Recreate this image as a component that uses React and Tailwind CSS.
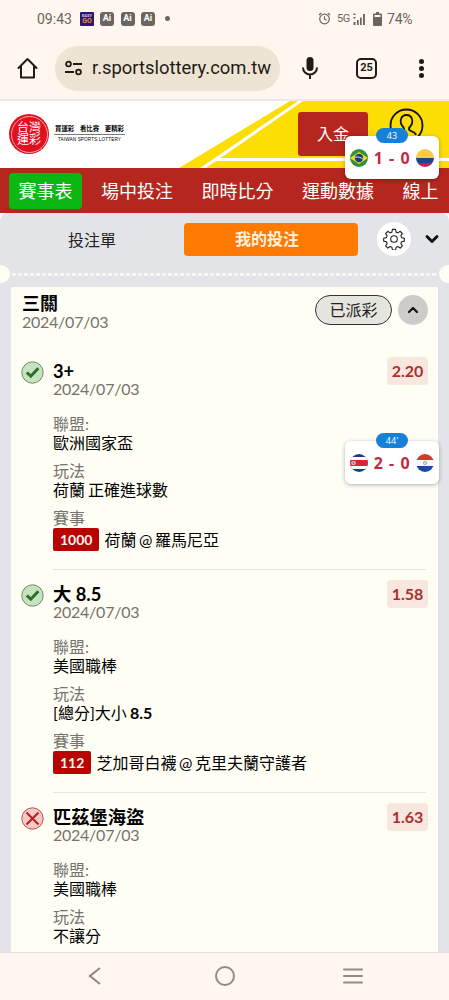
import React from "react";
import { ChevronDown, ChevronUp } from "lucide-react";

const NAV_ITEMS = ["場中投注", "即時比分", "運動數據", "線上"];

const BETS = [
  {
    title: "3+",
    won: true,
    odds: "2.20",
    league: "歐洲國家盃",
    play: "荷蘭 正確進球數",
    code: "1000",
    match: "荷蘭 @ 羅馬尼亞",
  },
  {
    title: "大 8.5",
    won: true,
    odds: "1.58",
    league: "美國職棒",
    play: (
      <>
        [總分]大小 <span className="font-bold">8.5</span>
      </>
    ),
    code: "112",
    match: "芝加哥白襪 @ 克里夫蘭守護者",
  },
  {
    title: "匹茲堡海盜",
    won: false,
    odds: "1.63",
    league: "美國職棒",
    play: "不讓分",
  },
];

const StatusBar = () => (
  <div className="flex h-[37px] shrink-0 items-center pl-[37px] pr-[36px] font-[Roboto] text-[14px] leading-none text-[#6b6561]">
    <span className="w-[35px]">09:43</span>
    <div className="ml-2 flex h-[14px] w-[14px] flex-col items-center justify-center rounded-[1px] bg-[#2b1675]">
      <span className="text-[4px] leading-[5px] font-bold text-[#d8d0f8]">EASY</span>
      <span className="text-[7px] leading-[6px] font-bold text-[#f0865c]">GO</span>
    </div>
    <div className="ml-[6px] flex gap-[6.500px]">
      {[0, 1, 2].map((i) => (
        <span
          key={i}
          className="flex h-[14px] w-[14px] items-center justify-center rounded-[3px] bg-[#6b6561] text-[9px] font-bold text-white"
        >
          Ai
        </span>
      ))}
    </div>
    <span className="ml-[10px] h-[5px] w-[5px] rounded-full bg-[#6b6561]" />
    <svg className="ml-auto" width="13" height="13" viewBox="0 0 13 13" fill="none" stroke="#6b6561">
      <circle cx="6.5" cy="7" r="4.8" strokeWidth="1.2" />
      <path d="M6.5 4.2V7l2 1.3M1 3 3.2 1M12 3 9.8 1" strokeWidth="1.2" />
    </svg>
    <span className="ml-[6px] w-[13px] text-[11px] tracking-[-0.5px]">5G</span>
    <svg className="ml-[2px]" width="14" height="12" viewBox="0 0 14 12" fill="#6b6561">
      <path d="M1 2l1.5-2L4 2zM1 4h3L2.500 6zM1.500 9h2v3h-2zM5 7h1.700v5H5zM8 4.500h1.700V12H8zM11 1h1.900v11H11z" />
    </svg>
    <svg className="ml-[7px]" width="9" height="14" viewBox="0 0 9 14">
      <path d="M3 0h3v1.500h2A1 1 0 0 1 9 2.500V13a1 1 0 0 1-1 1H1a1 1 0 0 1-1-1V2.500A1 1 0 0 1 1 1.500h2z" fill="#6b6561" />
      <path d="M1.500 3h6v2h-6z" fill="#fef6ef" />
    </svg>
    <span className="ml-[5px] w-[26px] tracking-[-0.2px]">74%</span>
  </div>
);

const AddressBar = () => (
  <div className="flex h-[64px] shrink-0 items-center border-b-2 border-[#eee8e2] pl-[17px] pr-[25px] text-[#1e1b16]">
    <svg width="21" height="22" viewBox="0 0 21 22" fill="none" stroke="currentColor" strokeWidth="2" strokeLinejoin="round" strokeLinecap="round">
      <path d="M1.500 11 10.500 2l9 9M4 9.500V20.500h13V9.500" />
    </svg>
    <div className="ml-[17px] flex h-[45px] w-[225px] items-center rounded-full bg-[#ede4d3] pl-[10px]">
      <svg width="17" height="16" viewBox="0 0 17 16" fill="none" stroke="currentColor" strokeWidth="1.800">
        <circle cx="3.500" cy="4" r="2.400" />
        <path d="M8 4h9M0 12h9" />
        <circle cx="13.500" cy="12" r="2.400" />
      </svg>
      <span className="ml-[10px] w-[180px] font-[Roboto] text-[18.400px] whitespace-nowrap">
        r.sportslottery.com.tw
      </span>
    </div>
    <svg className="ml-[22px]" width="16" height="22" viewBox="0 0 16 22">
      <rect x="4.500" y="0" width="7" height="14" rx="3.500" fill="currentColor" />
      <path d="M1 10.500a7 7 0 0 0 14 0M8 17v5" fill="none" stroke="currentColor" strokeWidth="2" />
    </svg>
    <div className="ml-[38px] flex h-[21px] w-[21px] items-center justify-center rounded-[5px] border-2 border-current font-[Roboto] text-[11px] font-bold">
      25
    </div>
    <div className="ml-auto flex flex-col gap-[2px]">
      <span className="h-[5px] w-[5px] rounded-full bg-current" />
      <span className="h-[5px] w-[5px] rounded-full bg-current" />
      <span className="h-[5px] w-[5px] rounded-full bg-current" />
    </div>
  </div>
);

const SiteHeader = () => (
  <header className="relative flex h-[67px] shrink-0 items-start bg-white">
    <svg className="absolute inset-0" width="449" height="67" viewBox="0 0 449 67">
      <path d="M179 67 290 0h159v67z" fill="#fcdd04" />
      <path d="M200 67 298 0h5L206 67z" fill="#fff" />
      <path d="M217 57h232v3H213z" fill="#fff" />
    </svg>
    <div className="relative flex pl-[9px] pt-[13px]">
      <div className="flex h-10 w-10 items-center justify-center rounded-full bg-[#e0101f]">
        <div className="flex h-[37px] w-[37px] flex-col items-center justify-center rounded-full border border-[#f7a5a8] text-[12px] text-white">
          <span className="h-[12px] leading-[12px]">台灣</span>
          <span className="h-[12px] leading-[12px]">運彩</span>
        </div>
      </div>
      <div className="ml-[5px] w-[71px] pt-[10px] text-black">
        <div className="flex justify-between border-b border-[#777] px-[1px] pb-[1px] text-[6.400px] leading-[9px] font-bold whitespace-nowrap">
          <span>買運彩</span>
          <span>看比賽</span>
          <span>更精彩</span>
        </div>
        <div className="pt-[2px] text-center font-['Liberation_Sans'] text-[4.700px] leading-[6px] tracking-[0.1px] whitespace-nowrap">
          TAIWAN SPORTS LOTTERY
        </div>
      </div>
    </div>
    <div className="relative mt-[11px] ml-[173px] flex h-[44px] w-[70px] items-center justify-center rounded-[3px] bg-[#b5261e] text-[16px] text-white">
      入金
    </div>
    <svg className="relative mt-[7px] ml-[21px]" width="35" height="35" viewBox="0 0 35 35" fill="none" stroke="#111" strokeWidth="1.800">
      <circle cx="17.500" cy="17.500" r="16" />
      <path d="M15 20c-3-3-4-6-3-9 .8-2.600 3-4 5.500-4s4.700 1.400 5.500 4c1 3 0 6-3 9-.6 2 .8 2.700 3 3.500 2 .7 3.500 1.500 4 3.500M15 20c.6 2-.8 2.700-3 3.500-2 .7-3.500 1.500-4 3.500" />
    </svg>
  </header>
);

const MainNav = () => (
  <nav className="flex h-[45px] shrink-0 items-center bg-[#b5261e] pl-[9px] text-[18px] text-white">
    <span className="flex h-9 w-[73px] shrink-0 items-center justify-center rounded-[4px] bg-[#0bb813] pt-[2px]">
      賽事表
    </span>
    <div className="ml-[19px] flex gap-[28.500px] pt-[2px] whitespace-nowrap">
      {NAV_ITEMS.map((item) => (
        <span key={item} className="shrink-0">
          {item}
        </span>
      ))}
    </div>
  </nav>
);

const GearIcon = () => (
  <svg width="22" height="22" viewBox="0 0 24 24" fill="none" stroke="#222" strokeWidth="1.200" strokeLinejoin="round">
    <circle cx="12" cy="12" r="3.600" />
    <path d="M10.300 1.500h3.400l.6 3 1.900.8 2.600-1.700 2.300 2.400-1.600 2.600.8 1.900 3 .6v3.200l-3 .7-.8 1.900 1.600 2.600-2.300 2.400-2.600-1.700-1.900.8-.6 3h-3.400l-.6-3-1.900-.8-2.600 1.700-2.300-2.400 1.600-2.600-.8-1.900-3-.7v-3.200l3-.6.8-1.900L2.900 6l2.300-2.400 2.600 1.700 1.900-.8z" />
  </svg>
);

const SlipTabs = () => (
  <div className="flex h-[52px] shrink-0 items-center text-[16px]">
    <span className="w-[184px] pt-px text-center text-[#222]">投注單</span>
    <span className="flex h-[33px] w-[174px] items-center justify-center rounded-[4px] bg-[#ff7a00] pr-[8px] font-bold text-[#fff3e0]">
      我的投注
    </span>
    <span className="ml-[19px] flex h-[34px] w-[34px] items-center justify-center rounded-full bg-white">
      <GearIcon />
    </span>
    <ChevronDown className="ml-[11px]" size={20} strokeWidth={3.5} color="#111" />
  </div>
);

const Perforation = () => (
  <div className="flex h-[18px] shrink-0 items-center justify-between">
    <span className="h-[18px] w-[10px] rounded-r-full bg-[#fffef5]" />
    <svg className="shrink-0" width="426" height="3" viewBox="0 0 426 3">
      <path d="M0 1.500h426" stroke="#fffef5" strokeWidth="2" strokeDasharray="4 2" />
    </svg>
    <span className="h-[18px] w-[10px] rounded-l-full bg-[#fffef5]" />
  </div>
);

const ResultIcon = ({ won }) => (
  <svg width="23" height="23" viewBox="0 0 23 23" fill="none">
    <circle cx="11.500" cy="11.500" r="10.700" fill={won ? "#c5e3bd" : "#f7c9c5"} stroke={won ? "#71866e" : "#a95450"} />
    {won ? (
      <path d="M5.800 11.500 9.800 15.200 17.300 7.300" stroke="#2c6e2c" strokeWidth="3" />
    ) : (
      <path d="M5.500 5.500 17.500 17.500M17.500 5.500 5.500 17.500" stroke="#b81c1c" strokeWidth="2" />
    )}
  </svg>
);

const Field = ({ label, children }) => (
  <div className="h-[47px]">
    <div className="h-[19px] leading-[19px] text-[#75736d]">{label}</div>
    <div className="h-[19px] leading-[19px] whitespace-nowrap text-black [word-spacing:-1px]">{children}</div>
  </div>
);

const BetRow = ({ bet }) => (
  <div className="flex h-[223px] shrink-0 pl-[10px] pr-[10px] text-[16px]">
    <div className="w-8 shrink-0 pt-[14px]">
      <ResultIcon won={bet.won} />
    </div>
    <div className="relative flex-1">
      <div className="pt-[14px] text-[18.300px] leading-[20px] font-bold text-black">{bet.title}</div>
      <div className="h-[33px] leading-[16px] tracking-[-0.250px] text-[#75736d]">2024/07/03</div>
      <Field label="聯盟:">{bet.league}</Field>
      <Field label="玩法">{bet.play}</Field>
      {bet.code && (
        <>
          <div className="h-[20px] leading-[19px] text-[#75736d]">賽事</div>
          <div className="flex h-[23px] items-center gap-[5px] whitespace-nowrap">
            <span className="flex h-[23px] items-center rounded-[2px] bg-[#b90303] px-[7px] text-[14px] font-bold text-[#fff4ee]">
              {bet.code}
            </span>
            <span className="text-black [word-spacing:-1.500px]">{bet.match}</span>
          </div>
        </>
      )}
      <div className="mt-[18px] mr-[-39px] h-px bg-[#e9e3da]" />
    </div>
    <div className="mt-[10px] flex h-7 w-[41px] items-center justify-center rounded-[4px] bg-[#f8e7df] font-bold text-[#aa302b]">
      {bet.odds}
    </div>
  </div>
);

const Ticket = () => (
  <section className="mx-auto mt-[4px] flex min-h-0 w-[427px] flex-1 flex-col overflow-hidden rounded-t-[2px] bg-[#fffef5]">
    <div className="flex h-[60px] shrink-0 items-start pl-[11px] pr-[10px] pt-[6px]">
      <div>
        <div className="text-[18px] leading-[20px] font-bold text-black">三關</div>
        <div className="text-[16px] leading-[18px] tracking-[-0.250px] text-[#75736d]">2024/07/03</div>
      </div>
      <span className="mt-[2px] ml-auto flex h-[30px] w-[77px] items-center justify-center rounded-full border border-[#333] bg-[#e6e4df] text-[16px] text-[#222]">
        已派彩
      </span>
      <span className="mt-[2px] ml-[6px] flex h-[30px] w-[30px] items-center justify-center rounded-full bg-[#ceccca]">
        <ChevronUp size={16} strokeWidth={3.2} color="#111" />
      </span>
    </div>
    {BETS.map((bet) => (
      <BetRow key={bet.title} bet={bet} />
    ))}
  </section>
);

const Flag = ({ id, children }) => (
  <svg width="18" height="18" viewBox="0 0 18 18">
    <clipPath id={id}>
      <circle cx="9" cy="9" r="9" />
    </clipPath>
    <g clipPath={`url(#${id})`}>{children}</g>
  </svg>
);

const Brazil = () => (
  <Flag id="brazil">
    <path d="M0 0h18v18H0z" fill="#30923c" />
    <path d="M0 9 9 3l9 6-9 6z" fill="#f4db21" />
    <circle cx="9" cy="9" r="4.200" fill="#173d80" />
    <path d="M5 8.200c3-.6 6 .1 8 2" stroke="#dce7df" fill="none" />
  </Flag>
);

const Colombia = () => (
  <Flag id="colombia">
    <path d="M0 0h18v9H0z" fill="#f7cd3b" />
    <path d="M0 9h18v5H0z" fill="#20438f" />
    <path d="M0 14h18v4H0z" fill="#c72239" />
  </Flag>
);

const CostaRica = () => (
  <Flag id="costa-rica">
    <path d="M0 0h18v18H0z" fill="#203b87" />
    <path d="M0 3h18v12H0z" fill="#fff" />
    <path d="M0 6h18v6H0z" fill="#d92530" />
    <ellipse cx="3.500" cy="9" rx="2.400" ry="2" fill="#d8cbc1" />
    <circle cx="3.500" cy="9" r="1" fill="#6c7c70" />
  </Flag>
);

const Paraguay = () => (
  <Flag id="paraguay">
    <path d="M0 0h18v6H0z" fill="#d33a2c" />
    <path d="M0 6h18v6H0z" fill="#f6f6f6" />
    <path d="M0 12h18v6H0z" fill="#1b46ad" />
    <circle cx="9" cy="9" r="1.700" fill="#d3dac7" stroke="#8b9b82" strokeWidth=".7" />
  </Flag>
);

const ScoreBubble = ({ minute, score, home, away, className }) => (
  <div className={`absolute left-[345px] flex h-[43px] w-[94px] items-center justify-between rounded-[6px] bg-white px-[5px] shadow-[0_1px_4px_rgba(0,0,0,0.3)] ${className}`}>
    <span className="absolute top-[-8px] left-[31px] flex h-[15px] w-8 items-center justify-center rounded-full bg-[#1781d9] font-['Open_Sans'] text-[9px] text-white">
      {minute}
    </span>
    {home}
    <span className="font-['Noto_Sans'] text-[16px] font-bold tracking-[0.8px] whitespace-nowrap text-[#c32943] [word-spacing:0.500px]">
      {score}
    </span>
    {away}
  </div>
);

const BottomBar = () => (
  <div className="flex h-12 shrink-0 items-center border-t border-[#e8e1db] bg-[#fef6f1] pb-[2px] pl-[88px]">
    <svg width="13" height="18" viewBox="0 0 13 18" fill="none" stroke="#918b86" strokeWidth="2.200">
      <path d="M12 1 2 9l10 8" />
    </svg>
    <span className="ml-[114px] h-5 w-5 rounded-full border-2 border-[#918b86]" />
    <svg className="ml-[108px]" width="20" height="16" viewBox="0 0 20 16" stroke="#918b86" strokeWidth="2" strokeLinecap="round">
      <path d="M1 1.500h18M1 8h18M1 14.500h18" />
    </svg>
  </div>
);

export default function App() {
  return (
    <div
      lang="zh-TW"
      className="relative flex h-[1000px] w-[449px] flex-col overflow-hidden bg-[#fef6ef] font-[Lato,'Noto_Sans_CJK_TC',sans-serif]"
    >
      <StatusBar />
      <AddressBar />
      <SiteHeader />
      <MainNav />
      <main className="flex min-h-0 flex-1 flex-col bg-white">
        <div className="flex min-h-0 flex-1 flex-col rounded-t-[8px] bg-[#e3e4e8]">
          <SlipTabs />
          <Perforation />
          <Ticket />
        </div>
      </main>
      <BottomBar />
      <ScoreBubble minute="43" score="1 - 0" home={<Brazil />} away={<Colombia />} className="top-[136px]" />
      <ScoreBubble minute="44'" score="2 - 0" home={<CostaRica />} away={<Paraguay />} className="top-[441px]" />
    </div>
  );
}
